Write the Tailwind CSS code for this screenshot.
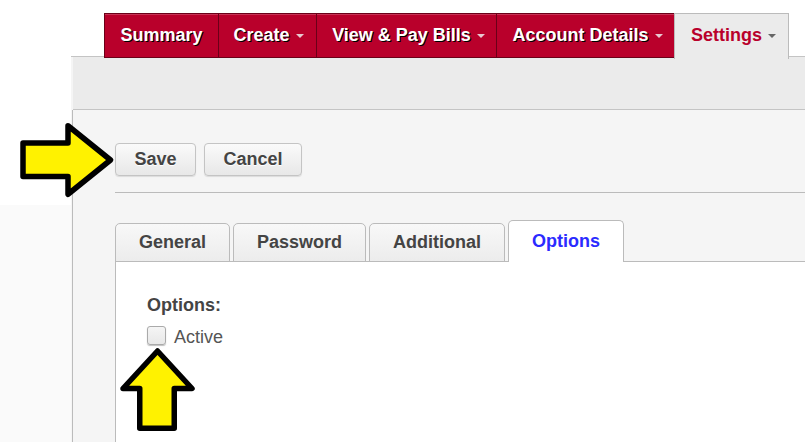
<!DOCTYPE html>
<html>
<head>
<meta charset="utf-8">
<script src="https://cdn.jsdelivr.net/npm/@tailwindcss/browser@4"></script>
</head>
<body class="bg-white">
<div class="relative w-[805px] h-[442px] overflow-hidden bg-white font-['Liberation_Sans',sans-serif] text-[18px] text-[#444]">
    <!-- left strip -->
    <div class="absolute left-0 top-[205px] w-[72px] h-[237px] bg-[#fafafa]"></div>

    <!-- Nav tabs -->
    <div class="relative z-10 flex h-[58px] pt-[13px] pl-[104px] font-bold">
        <a class="flex items-center justify-center w-[115px] h-[45px] bg-[#b9002b] border border-[#6b0018] shadow-[inset_0_1px_0_rgba(255,255,255,0.2)] text-white [text-shadow:1px_1px_0_#000]">Summary</a>
        <a class="flex items-center justify-center gap-[6px] w-[98px] h-[45px] pl-[2px] bg-[#b9002b] border-y border-r border-[#6b0018] shadow-[inset_0_1px_0_rgba(255,255,255,0.2)] text-white [text-shadow:1px_1px_0_#000]">Create <span class="w-0 h-0 border-x-[4px] border-x-transparent border-t-[4px] border-t-[#e8c8d0]"></span></a>
        <a class="flex items-center justify-center gap-[6px] w-[180px] h-[45px] pl-[4px] bg-[#b9002b] border-y border-r border-[#6b0018] shadow-[inset_0_1px_0_rgba(255,255,255,0.2)] text-white [text-shadow:1px_1px_0_#000]">View &amp; Pay Bills <span class="w-0 h-0 border-x-[4px] border-x-transparent border-t-[4px] border-t-[#e8c8d0]"></span></a>
        <a class="flex items-center justify-center gap-[6px] w-[177px] h-[45px] pl-[4px] bg-[#b9002b] border-y border-[#6b0018] shadow-[inset_0_1px_0_rgba(255,255,255,0.2)] text-white [text-shadow:1px_1px_0_#000]">Account Details <span class="w-0 h-0 border-x-[4px] border-x-transparent border-t-[4px] border-t-[#e8c8d0]"></span></a>
        <a class="flex items-center justify-center gap-[6px] w-[115px] h-[46px] pl-[4px] pb-[2px] bg-[#ebebeb] border-x border-t border-[#bbb] text-[#b9002b]">Settings <span class="w-0 h-0 border-x-[4px] border-x-transparent border-t-[4px] border-t-[#666]"></span></a>
    </div>

    <!-- Panel -->
    <div class="relative ml-[71px] -mt-[2px] h-[386px] border-t border-[#c4c4c4] bg-[#f5f5f5]">
        <div class="h-[53px] ml-[2px] bg-[#ebebeb] border-b border-[#c4c4c4]"></div>
        <div class="h-full ml-[1px] border-l border-[#bbb] pl-[42px]">
            <!-- Actions -->
            <div class="flex gap-[8px] pt-[33px] pb-[16px] border-b border-[#bbb] font-bold">
                <button class="w-[81px] h-[33px] rounded-[4px] border border-[#c4c4c4] bg-gradient-to-b from-[#fafafa] to-[#e8e8e8] text-[#444] [text-shadow:0_1px_0_#fff] shadow-[0_1px_1px_rgba(0,0,0,0.1)]">Save</button>
                <button class="w-[98px] h-[33px] rounded-[4px] border border-[#c4c4c4] bg-gradient-to-b from-[#fafafa] to-[#e8e8e8] text-[#444] [text-shadow:0_1px_0_#fff] shadow-[0_1px_1px_rgba(0,0,0,0.1)]">Cancel</button>
            </div>

            <!-- Tabs -->
            <div class="relative z-10 flex items-end gap-[3px] h-[42px] mt-[27px] -mb-px font-bold">
                <a class="flex items-center justify-center w-[115px] h-[39px] rounded-t-[5px] border border-[#bbb] bg-gradient-to-b from-[#f8f8f8] to-[#ececec]">General</a>
                <a class="flex items-center justify-center w-[133px] h-[39px] rounded-t-[5px] border border-[#bbb] bg-gradient-to-b from-[#f8f8f8] to-[#ececec]">Password</a>
                <a class="flex items-center justify-center w-[136px] h-[39px] rounded-t-[5px] border border-[#bbb] bg-gradient-to-b from-[#f8f8f8] to-[#ececec]">Additional</a>
                <a class="flex items-center justify-center w-[116px] h-[42px] rounded-t-[5px] border border-b-0 border-[#bbb] bg-white text-[#2b2bff]">Options</a>
            </div>

            <!-- Tab content -->
            <div class="h-[200px] border-t border-l border-[#bbb] bg-white pl-[31px] pt-[33px]">
                <div class="font-bold leading-[20px]">Options:</div>
                <label class="flex items-center gap-[8px] mt-[12px] leading-[20px] text-[#555]">
                    <span class="w-[19px] h-[19px] -mt-[3px] rounded-[3px] border border-[#aaa] bg-gradient-to-b from-[#f5f5f5] to-[#e8e8e8] shadow-[0_1px_1px_rgba(0,0,0,0.25)]"></span>
                    Active
                </label>
            </div>
        </div>
    </div>

    <!-- Annotation arrows -->
    <svg class="absolute z-20 left-[20px] top-[122px]" width="95" height="77" viewBox="0 0 95 77">
        <path d="M3 21 H48 V3.75 L90.5 38 L48 72.25 V54.5 H3 Z" fill="#fff200" stroke="#000" stroke-width="5.5" stroke-linejoin="round"/>
    </svg>
    <svg class="absolute z-20 left-[118px] top-[346px]" width="80" height="88" viewBox="0 0 80 88">
        <path d="M39.5 5 L74 42.5 H56.25 V82.25 H21.75 V42.5 H5 Z" fill="#fff200" stroke="#000" stroke-width="5.5" stroke-linejoin="round"/>
    </svg>
</div>
</body>
</html>
